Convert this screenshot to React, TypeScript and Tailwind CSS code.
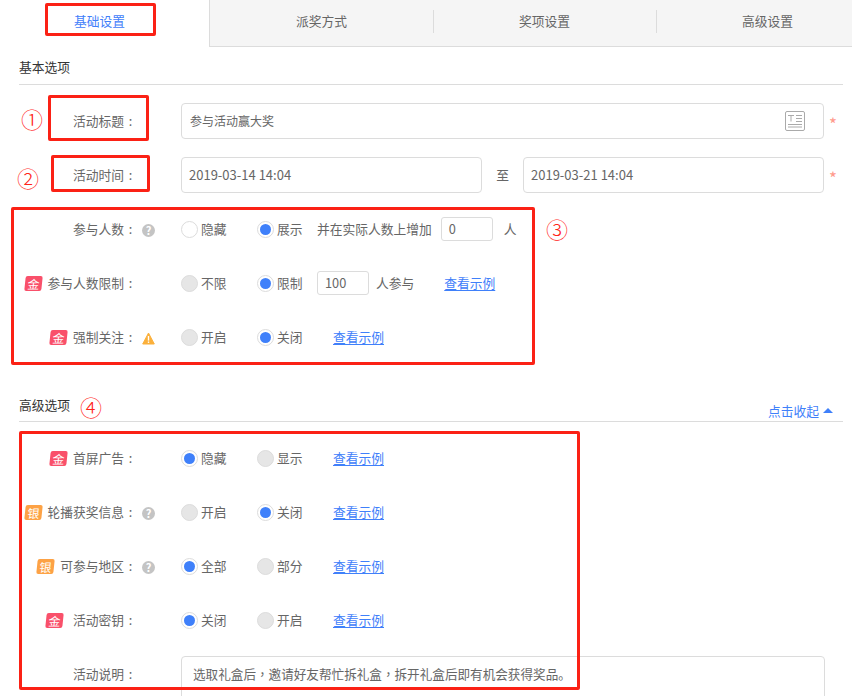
import React from "react";

const cjk = "font-['Microsoft_YaHei','Noto_Sans_CJK_SC','Noto_Sans',sans-serif]";

function Badge({ kind, className = "" }: { kind: "gold" | "silver"; className?: string }) {
  return (
    <span
      className={`mr-[6px] flex h-[15px] w-[17px] shrink-0 -skew-x-6 items-center justify-center rounded-[2px] text-[12px] leading-none text-white ${
        kind === "gold" ? "bg-[#f9506a]" : "bg-[#fda245]"
      } ${className}`}
    >
      {kind === "gold" ? "金" : "银"}
    </span>
  );
}

function HelpIcon() {
  return (
    <span className="flex h-[13px] w-[13px] items-center justify-center rounded-full bg-[#c4c4c4] text-[11px] font-bold leading-none text-white">
      ?
    </span>
  );
}

function WarnIcon() {
  return (
    <svg width="13" height="13" viewBox="0 0 13 13">
      <path d="M6.5 1 L12.3 12 L0.7 12 Z" fill="#fbb03b" stroke="#fbb03b" strokeLinejoin="round" />
      <rect x="5.8" y="4" width="1.4" height="4.6" fill="#fff" />
      <rect x="5.8" y="9.5" width="1.4" height="1.4" fill="#fff" />
    </svg>
  );
}

function Radio({ state, label, className = "" }: { state: "on" | "off" | "disabled"; label: string; className?: string }) {
  return (
    <div className={`flex shrink-0 items-center ${className}`}>
      <span
        className={`flex h-[17px] w-[17px] items-center justify-center rounded-full border border-[#dcdcdc] ${
          state === "disabled" ? "bg-[#e6e6e6]" : "bg-white"
        }`}
      >
        {state === "on" && <span className="h-[11px] w-[11px] rounded-full bg-[#3f80fa]" />}
      </span>
      <span className="ml-[3px]">{label}</span>
    </div>
  );
}

function Example({ className = "" }: { className?: string }) {
  return <a className={`text-[#3f80fa] underline underline-offset-2 ${className}`}>查看示例</a>;
}

function Row({
  label,
  badge,
  hint,
  badgeClass,
  className = "",
  children,
}: {
  label: string;
  badge?: "gold" | "silver";
  hint?: React.ReactNode;
  badgeClass?: string;
  className?: string;
  children?: React.ReactNode;
}) {
  return (
    <div className={`flex items-center ${className}`}>
      <div className="flex w-[137px] shrink-0 items-center justify-end">
        {badge && <Badge kind={badge} className={badgeClass} />}
        <span className="whitespace-nowrap">{label}</span>
        <span className="w-[13px] text-center">:</span>
      </div>
      <div className="flex w-[44px] shrink-0 items-center pl-[5px] pt-[3px]">{hint}</div>
      {children}
    </div>
  );
}

function TextBox({ value, className = "", children }: { value: string; className?: string; children?: React.ReactNode }) {
  return (
    <div className={`flex h-[36px] items-center justify-between rounded-[4px] border border-[#dcdcdc] bg-white pl-[7px] ${className}`}>
      <span>{value}</span>
      {children}
    </div>
  );
}

function SmallInput({ value }: { value: string }) {
  return (
    <div className="flex h-[24px] w-[52px] shrink-0 items-center rounded-[3px] border border-[#dcdcdc] pl-[7px]">{value}</div>
  );
}

function Tab({ label, divider }: { label: string; divider?: boolean }) {
  return (
    <div className="relative flex w-[223px] shrink-0 items-center justify-center pb-[5px]">
      {divider && <span className="absolute left-0 top-[10px] h-[23px] w-px bg-[#dcdcdc]" />}
      {label}
    </div>
  );
}

function Required() {
  return <span className="ml-[5px] pt-[5px] text-[17px] leading-none text-[#ff9a8c]">*</span>;
}

function Mark({ className, children }: { className: string; children: string }) {
  return <span className={`absolute text-[22px] font-light leading-none text-[#ff2418] ${className}`}>{children}</span>;
}

function RedBox({ className }: { className: string }) {
  return <div className={`absolute rounded-[2px] border-[3px] border-[#fb2115] ${className}`} />;
}

export default function App() {
  return (
    <div className={`relative h-[696px] w-[852px] overflow-hidden bg-white text-[12.75px] text-[#666] ${cjk}`}>
      <div className="flex h-[47px]">
        <div className="flex w-[209px] shrink-0 items-center justify-center pb-[5px] pr-[10px] text-[#3f80fa]">基础设置</div>
        <div className="flex flex-1 overflow-hidden border-b border-l border-[#dcdcdc] bg-[#f5f5f5]">
          <Tab label="派奖方式" />
          <Tab label="奖项设置" divider />
          <Tab label="高级设置" divider />
        </div>
      </div>

      <div className="px-[19px] pt-[10px]">
        <div className="h-[28px] w-[824px] border-b border-[#dcdcdc] text-[#333]">基本选项</div>
      </div>

      <div className="pt-[18px]">
        <Row label="活动标题">
          <TextBox value="参与活动赢大奖" className="w-[643px] pl-[8px] pr-[18px] text-[12px]">
            <svg width="20" height="20" viewBox="0 0 20 20" fill="none" stroke="#aaa">
              <rect x="0.5" y="0.5" width="19" height="19" rx="1.5" />
              <path d="M3 4.5h6M6 4.5v6M11 4.5h6M11 7.5h6M11 10.5h6M3 13.5h14M3 16h14" />
            </svg>
          </TextBox>
          <Required />
        </Row>
        <Row label="活动时间" className="mt-[18px]">
          <TextBox value="2019-03-14 14:04" className="w-[301px] text-[13px]" />
          <span className="w-[41px] text-center">至</span>
          <TextBox value="2019-03-21 14:04" className="w-[301px] text-[13px]" />
          <Required />
        </Row>
      </div>

      <div className="mt-[24px] flex flex-col gap-[30px]">
        <Row label="参与人数" hint={<HelpIcon />} className="h-[24px]">
          <Radio state="off" label="隐藏" className="w-[76px]" />
          <Radio state="on" label="展示" className="w-[60px]" />
          <span className="whitespace-nowrap">并在实际人数上增加</span>
          <div className="ml-[9px]"><SmallInput value="0" /></div>
          <span className="ml-[11px]">人</span>
        </Row>
        <Row label="参与人数限制" badge="gold" className="h-[24px]">
          <Radio state="disabled" label="不限" className="w-[76px]" />
          <Radio state="on" label="限制" className="w-[60px]" />
          <SmallInput value="100" />
          <span className="ml-[7px] whitespace-nowrap">人参与</span>
          <Example className="ml-[30px]" />
        </Row>
        <Row label="强制关注" badge="gold" hint={<WarnIcon />} className="h-[24px]">
          <Radio state="disabled" label="开启" className="w-[76px]" />
          <Radio state="on" label="关闭" className="w-[76px]" />
          <Example />
        </Row>
      </div>

      <div className="relative mx-[19px] mt-[35px] flex h-[38px] w-[824px] items-start justify-between border-b border-[#dcdcdc] pt-[11px]">
        <span className="text-[#333]">高级选项</span>
        <span className="mr-[10px] mt-[6px] flex items-center text-[#3f80fa]">
          点击收起
          <span className="ml-[4px] h-0 w-0 border-x-[5px] border-b-[5px] border-x-transparent border-b-[#3f80fa]" />
        </span>
      </div>

      <div className="mt-[24px] flex flex-col gap-[30px]">
        <Row label="首屏广告" badge="gold" className="h-[24px]">
          <Radio state="on" label="隐藏" className="w-[76px]" />
          <Radio state="disabled" label="显示" className="w-[76px]" />
          <Example />
        </Row>
        <Row label="轮播获奖信息" badge="silver" hint={<HelpIcon />} className="h-[24px]">
          <Radio state="disabled" label="开启" className="w-[76px]" />
          <Radio state="on" label="关闭" className="w-[76px]" />
          <Example />
        </Row>
        <Row label="可参与地区" badge="silver" hint={<HelpIcon />} className="h-[24px]">
          <Radio state="on" label="全部" className="w-[76px]" />
          <Radio state="disabled" label="部分" className="w-[76px]" />
          <Example />
        </Row>
        <Row label="活动密钥" badge="gold" badgeClass="mr-[10px]" className="h-[24px]">
          <Radio state="on" label="关闭" className="w-[76px]" />
          <Radio state="disabled" label="开启" className="w-[76px]" />
          <Example />
        </Row>
      </div>

      <div className="mt-[24px] flex items-start">
        <div className="flex w-[181px] shrink-0 pl-[73px] pt-[8px]">
          活动说明<span className="w-[13px] text-center">:</span>
        </div>
        <div className="h-[100px] w-[644px] rounded-[4px] border border-[#dcdcdc] px-[11px] pt-[8px] text-[12.6px]">
          选取礼盒后<span className="font-['Noto_Sans_CJK_TC']">，</span>邀请好友帮忙拆礼盒<span className="font-['Noto_Sans_CJK_TC']">，</span>拆开礼盒后即有机会获得奖品。
        </div>
      </div>

      <RedBox className="left-[45px] top-[3px] h-[33px] w-[111px]" />
      <RedBox className="left-[48px] top-[95px] h-[46px] w-[101px]" />
      <RedBox className="left-[51px] top-[155px] h-[37px] w-[99px]" />
      <RedBox className="left-[11px] top-[207px] h-[158px] w-[524px]" />
      <RedBox className="left-[19px] top-[431px] h-[259px] w-[561px]" />

      <Mark className="left-[21px] top-[107px]">①</Mark>
      <Mark className="left-[17px] top-[166px]">②</Mark>
      <Mark className="left-[546px] top-[217px]">③</Mark>
      <Mark className="left-[80px] top-[395px]">④</Mark>
    </div>
  );
}
